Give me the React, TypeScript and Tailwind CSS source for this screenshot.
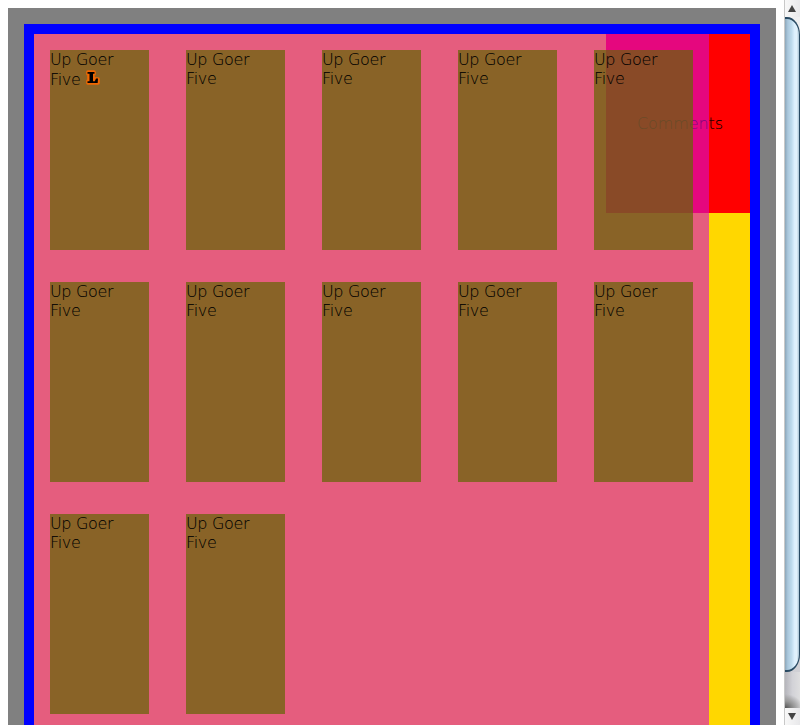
const cards = Array.from({ length: 12 }, (_, i) => i);

function Cursor() {
  return (
    <svg width="16" height="17" viewBox="0 0 16 17" className="ml-[5px] block">
      <path d="M3 3H9V5H8V12H10V10H13V14H3V12H4V5H3Z" fill="#f26700" stroke="#f26700" strokeWidth="3.6" strokeLinejoin="round" />
      <path d="M2.5 3H9.5V4.7H8V12.2H9.8L11 9.5H13L12.7 14H2.5V12.3H4.5V4.7H2.5Z" fill="#000" />
    </svg>
  );
}

function Scrollbar() {
  return (
    <div className="flex h-full w-4 shrink-0 flex-col overflow-hidden border-l border-[#c8c8c8] bg-[linear-gradient(90deg,#b5b5bb,#d2d2d7_50%,#dededf)]">
      <div className="flex h-[17px] shrink-0 items-center justify-center bg-[linear-gradient(90deg,#f8f8f8,#e8e8ea)]">
        <svg width="8" height="7" viewBox="0 0 8 7" className="-ml-px"><path d="M4 0L8 7H0Z" fill="#444" /></svg>
      </div>
      <div className="h-[655px] shrink-0 bg-[linear-gradient(180deg,#efeff0_20px,#d0d0d5_21px)]">
        <div className="-ml-px h-full w-[16px] rounded-tr-[13px_18px] rounded-br-[13px_18px] border-y-2 border-r border-[#294a63] bg-[linear-gradient(90deg,#829bac,#a9c7dc_25%,#bedaec_50%,#dceffd_70%,#e3f2fc_85%,#a9c3d4)]" />
      </div>
      <div className="flex-1 bg-[radial-gradient(ellipse_18px_14px_at_0_100%,#555,#999_50%,transparent)]" />
      <div className="flex h-[17px] shrink-0 items-center justify-center bg-[linear-gradient(90deg,#f8f8f8,#e8e8ea)]">
        <svg width="8" height="7" viewBox="0 0 8 7" className="-ml-px"><path d="M0 0H8L4 7Z" fill="#444" /></svg>
      </div>
    </div>
  );
}

export default function App() {
  return (
    <div className="flex h-[725px] w-[800px] overflow-hidden bg-white font-['DejaVu_Sans_Light','DejaVu_Sans',sans-serif] text-[16px] leading-[19px] font-extralight text-black [-webkit-text-stroke:0.07px_#000]">
      <div className="flex-1 pt-2 pr-2 pl-2">
        <div className="h-[717px] bg-[#808080] px-4 pt-4">
          <div className="h-[701px] border-x-10 border-t-10 border-[#0000ff] bg-[#ffd700]">
            <div className="relative h-full">
              <div className="absolute top-0 right-0 flex h-[179px] w-[144px] items-center justify-center bg-[#ff0000] pl-[4px] tracking-[-0.1px]">
                Comments
              </div>
              <div className="relative grid h-full w-[675px] auto-rows-[200px] grid-cols-[repeat(5,99px)] content-start gap-x-[37px] gap-y-8 bg-[rgba(212,12,210,0.6)] p-4 tracking-[-0.35px]">
                {cards.map((i) => (
                  <div key={i} className="bg-[rgba(99,103,3,0.7)]">
                    <div>Up Goer</div>
                    <div className={i === 0 ? "flex h-5 items-start" : ""}>
                      <span className={i === 0 ? "pt-px" : ""}>Five</span>
                      {i === 0 && <Cursor />}
                    </div>
                  </div>
                ))}
              </div>
            </div>
          </div>
        </div>
      </div>
      <Scrollbar />
    </div>
  );
}
